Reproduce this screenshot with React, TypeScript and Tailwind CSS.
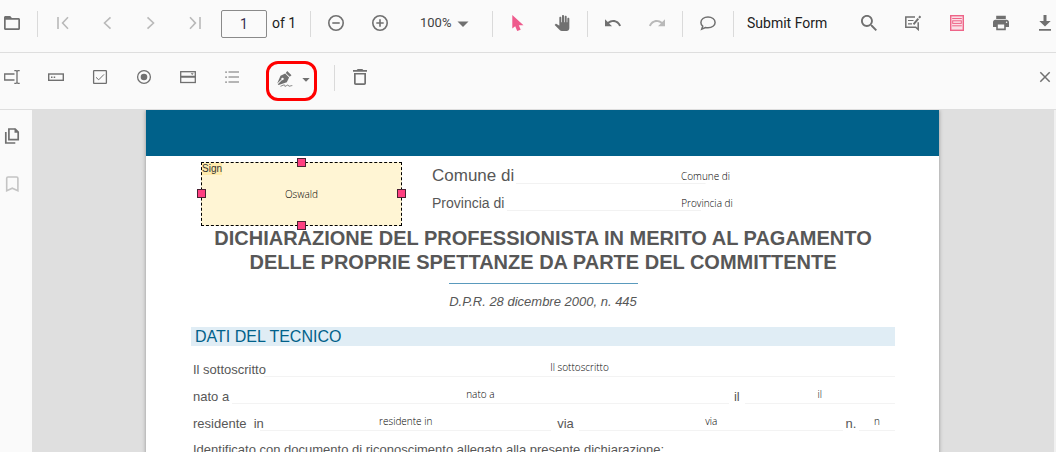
import { ReactNode } from "react"

type IconProps = { children: ReactNode; viewBox?: string; className?: string }

function Icon({ children, viewBox = "0 0 16 16", className = "" }: IconProps) {
  return (
    <svg viewBox={viewBox} fill="currentColor" aria-hidden="true" className={`size-4 shrink-0 ${className}`}>
      {children}
    </svg>
  )
}

function Line({ d, w = 1.6 }: { d: string; w?: number }) {
  return <path d={d} fill="none" stroke="currentColor" strokeWidth={w} />
}

function ToolButton({ label, children, className = "w-11", disabled }: {
  label: string
  children: ReactNode
  className?: string
  disabled?: boolean
}) {
  return (
    <button
      type="button"
      aria-label={label}
      disabled={disabled}
      className={`flex h-8 shrink-0 items-center justify-center disabled:text-[#b9b9b9] ${className}`}
    >
      {children}
    </button>
  )
}

function Separator() {
  return <div className="mx-[3px] mt-0.5 h-[26px] w-px shrink-0 bg-[#dadada]" />
}

function MainToolbar() {
  return (
    <div className="flex h-[53px] items-center border-b border-[#dedede] pb-1.5">
      <ToolButton label="Open file" className="w-[34px] pr-2.5">
        <Icon>
          <path fillRule="evenodd" d="M1.500 1h4.700l1.700 2h6.600C15.400 3 16 3.600 16 4.500v9c0 .9-.6 1.500-1.500 1.500h-13C.6 15 0 14.400 0 13.500v-11C0 1.600.6 1 1.500 1zM1.700 4.700v8.600h12.600V4.700z" />
        </Icon>
      </ToolButton>
      <Separator />
      <ToolButton label="First page" disabled>
        <Icon><Line d="M3 2v12M13 2.300 7.600 8l5.400 5.700" /></Icon>
      </ToolButton>
      <ToolButton label="Previous page" disabled>
        <Icon><Line d="M11.500 2.300 5.500 8l6 5.700" /></Icon>
      </ToolButton>
      <ToolButton label="Next page" disabled>
        <Icon><Line d="M4.500 2.300l6 5.700-6 5.700" /></Icon>
      </ToolButton>
      <ToolButton label="Last page" disabled>
        <Icon><Line d="M3 2.300 8.400 8 3 13.700M13 2v12" /></Icon>
      </ToolButton>
      <input
        type="text"
        aria-label="Page number"
        defaultValue="1"
        className="mx-1 mt-0.5 h-7 w-[46px] shrink-0 rounded-xs border border-[#8a8a8a] bg-transparent text-center text-sm text-[#3a3052]"
      />
      <span className="w-9 shrink-0 pl-px text-sm text-[#212121]">of 1</span>
      <Separator />
      <ToolButton label="Zoom out">
        <Icon>
          <circle cx="8" cy="8" r="7.2" fill="none" stroke="currentColor" strokeWidth="1.6" />
          <Line d="M4.300 8h7.400" />
        </Icon>
      </ToolButton>
      <ToolButton label="Zoom in">
        <Icon>
          <circle cx="8" cy="8" r="7.2" fill="none" stroke="currentColor" strokeWidth="1.6" />
          <Line d="M4.300 8h7.400M8 4.300v7.400" />
        </Icon>
      </ToolButton>
      <button type="button" className="flex w-[87px] shrink-0 items-center gap-1 pl-[18px] text-[13px] text-[#424242]">
        100%
        <Icon className="text-[#707070]"><path d="M2.500 6.500h11L8 12z" /></Icon>
      </button>
      <Separator />
      <ToolButton label="Selection" className="w-11 text-[#ee5a8c]">
        <Icon><path d="M2.300 0v13.500l2.900-2.200 2 4.700 3.500-1.200-1.900-4.600h4.700z" /></Icon>
      </ToolButton>
      <ToolButton label="Pan">
        <Icon viewBox="0 0 24 24">
          <path d="M23 5.5V20c0 2.2-1.8 4-4 4h-7.3c-1.08 0-2.1-.43-2.85-1.19L1 14.83s1.26-1.23 1.3-1.25c.22-.19.49-.29.79-.29.22 0 .42.06.6.16.04.01 4.31 2.46 4.31 2.46V4c0-.83.67-1.5 1.5-1.5S11 3.17 11 4v7h1V1.5c0-.83.67-1.5 1.5-1.5S15 .67 15 1.5V11h1V2.5c0-.83.67-1.5 1.5-1.5s1.5.67 1.5 1.5V11h1V5.5c0-.83.67-1.5 1.5-1.5s1.5.67 1.5 1.500z" />
        </Icon>
      </ToolButton>
      <Separator />
      <ToolButton label="Undo">
        <Icon viewBox="2 1.500 20.500 20.500">
          <path d="M12.5 8c-2.65 0-5.05.99-6.9 2.6L2 7v9h9l-3.62-3.62c1.39-1.16 3.16-1.88 5.12-1.88 3.54 0 6.55 2.31 7.6 5.5l2.37-.78C21.08 11.03 17.15 8 12.5 8z" />
        </Icon>
      </ToolButton>
      <ToolButton label="Redo" disabled>
        <Icon viewBox="1.500 1.500 20.500 20.500">
          <path d="M18.4 10.6C16.55 8.99 14.15 8 11.5 8c-4.65 0-8.58 3.03-9.96 7.22L3.9 16c1.05-3.19 4.05-5.5 7.6-5.5 1.95 0 3.73.72 5.12 1.88L13 16h9V7l-3.6 3.6z" />
        </Icon>
      </ToolButton>
      <Separator />
      <ToolButton label="Comment">
        <Icon><Line d="M1.700 14.200l1-3C1.500 10.200.9 9 .9 7.500c0-3.200 3.100-5.600 7.100-5.600s7.100 2.400 7.100 5.500-3.100 5.400-7.100 5.400c-1 0-1.800-.1-2.600-.3z" w={1.5} /></Icon>
      </ToolButton>
      <Separator />
      <button type="button" className="shrink-0 px-2.5 text-sm text-[#212121]">Submit Form</button>
      <div className="ml-auto flex shrink-0 gap-7 pr-[3px]">
        <ToolButton label="Search" className="w-4">
          <Icon viewBox="3 3 17.500 17.500">
            <path d="M15.5 14h-.79l-.28-.27C15.41 12.59 16 11.11 16 9.5 16 5.91 13.09 3 9.5 3S3 5.91 3 9.5 5.91 16 9.5 16c1.61 0 3.09-.59 4.23-1.57l.27.28v.79l5 4.99L20.49 19l-4.99-5zm-6 0C7.01 14 5 11.99 5 9.5S7.01 5 9.5 5 14 7.01 14 9.500 11.99 14 9.500 14z" />
          </Icon>
        </ToolButton>
        <ToolButton label="Edit annotations" className="w-4">
          <Icon>
            <Line d="M10 2H.8v10.200h9.900l2.500 2.300V7.200" w={1.5} />
            <Line d="M3 5.500h5.500M3 8.800h4" w={1.2} />
            <Line d="M8.500 9.300 13.300 3.700" w={2} />
            <Line d="M14 2.900 15.500 1.200" w={2} />
          </Icon>
        </ToolButton>
        <ToolButton label="Form designer" className="w-4 text-[#ee6488]">
          <Icon>
            <rect x="1.7" y=".7" width="12.600" height="14.600" fill="#fbdfe6" stroke="currentColor" strokeWidth="1.4" />
            <rect x="3.700" y="5.800" width="8.600" height="2.600" fill="none" stroke="currentColor" />
            <Line d="M3.200 3.500h9.600M3.200 10.800h9.600" w={1} />
          </Icon>
        </ToolButton>
        <ToolButton label="Print" className="w-4">
          <Icon viewBox="2 2 20 20">
            <path d="M19 8H5c-1.66 0-3 1.34-3 3v6h4v4h12v-4h4v-6c0-1.66-1.34-3-3-3zm-3 11H8v-5h8v5zm3-7c-.55 0-1-.45-1-1s.45-1 1-1 1 .45 1 1-.45 1-1 1zm-1-9H6v4h12V3z" />
          </Icon>
        </ToolButton>
        <ToolButton label="Download" className="w-4">
          <Icon><path d="M6.500 0h3v6h4.200L8 11.600 2.300 6h4.200zM2 14h12v1.800H2z" /></Icon>
        </ToolButton>
      </div>
    </div>
  )
}

function FormToolbar() {
  return (
    <div className="flex h-[57px] items-center border-b border-[#dedede] pb-2 pl-1">
      <div className="flex shrink-0 gap-7">
        <ToolButton label="Text box" className="w-4">
          <Icon>
            <Line d="M10.500 5H.7v6h9.800" w={1.3} />
            <Line d="M10.300 1.600h1.700l1 .8 1-.8h1.700M13 2.400v11.200M10.300 14.400h1.700l1-.8 1 .8h1.700" w={1.3} />
          </Icon>
        </ToolButton>
        <ToolButton label="Password" className="w-4">
          <Icon>
            <rect x=".7" y="5" width="14.600" height="6.300" fill="none" stroke="currentColor" strokeWidth="1.4" />
            <path d="M3 7.400h1.500v1.500H3zM5.700 7.400h1.500v1.500H5.700z" />
          </Icon>
        </ToolButton>
        <ToolButton label="Check box" className="w-4">
          <Icon>
            <rect x="1.600" y="1.600" width="12.800" height="12.800" rx=".6" fill="none" stroke="currentColor" strokeWidth="1.300" />
            <Line d="M4 8.300l2.700 2.500L12 5.400" w={1} />
          </Icon>
        </ToolButton>
        <ToolButton label="Radio button" className="w-4">
          <Icon>
            <circle cx="8" cy="8" r="6.400" fill="none" stroke="currentColor" strokeWidth="1.300" />
            <circle cx="8" cy="8" r="3.300" />
          </Icon>
        </ToolButton>
        <ToolButton label="Drop down" className="w-4">
          <Icon>
            <rect x=".7" y="2.700" width="14.600" height="10.800" fill="none" stroke="currentColor" strokeWidth="1.300" />
            <path d="M.5 6.800h15v2H.5zM10.700 4.300h3l-1.500 1.700z" />
          </Icon>
        </ToolButton>
        <ToolButton label="List box" className="w-4">
          <Icon>
            <path d="M1.300 2.400h1.500v1.300H1.300zM1.300 7.400h1.500v1.300H1.300zM1.300 12.400h1.500v1.300H1.300z" />
            <Line d="M4.500 3h10.500M4.500 8h10.500M4.500 13h10.500" w={1.2} />
          </Icon>
        </ToolButton>
      </div>
      <button
        type="button"
        aria-label="Add signature"
        className="mt-2 ml-[26px] flex h-10 w-[51px] shrink-0 items-center gap-[5px] rounded-xl border-3 border-[#ff0000] pb-1 pl-2"
      >
        <Icon>
          <path d="M10.200 0l4.300 4.300-1.800 1.500-3.900-3.900zM8.200 2.600l3.900 3.900-2.300 4.700L1.600 14l-.8-.7 4.300-4.200a1.200 1.200 0 1 0-.7-.7L.2 12.500 3.500 4.800z" />
          <Line d="M3.500 15.300c2-.8 3-1.500 4-1.200s-.3 1.400.8 1.200 1.500-1.400 2.600-1.200.3 1.200 1.400 1.100 1.500-.6 3-.6" w={0.9} />
        </Icon>
        <Icon><path d="M4.300 7h7.400L8 10.700z" /></Icon>
      </button>
      <div className="w-3.5 shrink-0" />
      <Separator />
      <ToolButton label="Delete">
        <Icon>
          <path fillRule="evenodd" d="M5.700 0h4.600l1 1H15v1.700H1V1h3.700zM2 4h12v10.300c0 1-.8 1.700-1.700 1.700H3.700C2.800 16 2 15.300 2 14.300zM3.700 5.600v8.700h8.600V5.600z" />
        </Icon>
      </ToolButton>
      <ToolButton label="Close" className="ml-auto w-[22px]">
        <Icon><Line d="M3.300 3.300l9.400 9.400M12.700 3.300l-9.400 9.400" w={1.5} /></Icon>
      </ToolButton>
    </div>
  )
}

function Sidebar() {
  return (
    <aside className="flex w-8 shrink-0 flex-col gap-8 bg-[#fafafa] pt-[18px] pl-1">
      <button type="button" aria-label="Page thumbnails" className="w-4">
        <Icon>
          <Line d="M4.900 1h6.300l3 3v7.700H4.900zM1.800 4v11h9.500" w={1.7} />
          <path d="M10.500.3 14.800 4.700h-4.300z" />
        </Icon>
      </button>
      <button type="button" aria-label="Bookmarks" disabled className="w-4 text-[#c4c4c4]">
        <Icon><Line d="M2.700 14.700V2.300c0-.8.500-1.300 1.300-1.300h8.600c.8 0 1.300.5 1.300 1.300v12.400L8.300 12.200z" /></Icon>
      </button>
    </aside>
  )
}

const handle = "absolute size-[9px] border border-[#4a2233] bg-[#ff4081]"

function SignatureField() {
  return (
    <div className="relative mt-1.5 flex h-16 w-[201px] shrink-0 items-center justify-center border border-dashed border-black bg-[#fff5d4] text-[10px] text-black">
      <span className="absolute top-0 left-0 bg-[#ffebac] leading-3 text-[#333]">Sign</span>
      <span className="font-['Open_Sans',sans-serif] font-light">Oswald</span>
      <i className={`${handle} -top-[5px] left-[95px]`} />
      <i className={`${handle} -bottom-[5px] left-[95px]`} />
      <i className={`${handle} top-[26px] -left-[5px]`} />
      <i className={`${handle} top-[26px] -right-[5px]`} />
    </div>
  )
}

function Field({ id, value, className = "h-[18px] border-b border-[#f3f3f3] pb-0.5" }: {
  id: string
  value: string
  className?: string
}) {
  return (
    <input
      id={id}
      type="text"
      defaultValue={value}
      className={`w-full min-w-0 text-center font-['Open_Sans',sans-serif] text-[10px] font-light text-black ${className}`}
    />
  )
}

const halfLine = "h-4 bg-[linear-gradient(#f2f2f2,#f2f2f2)] bg-[length:50%_1px] bg-bottom-left bg-no-repeat"

function DocumentPage() {
  return (
    <article className="mx-auto w-full max-w-[793px] self-start bg-white pb-10 font-['Liberation_Sans',Arial,sans-serif] text-[#575757] shadow-[0_0_4px_rgba(0,0,0,0.35)]">
      <div className="h-[46px] bg-[#00618a]" />
      <div className="pr-11 pl-[45px]">
        <div className="flex items-start gap-[30px] pl-2.5">
          <SignatureField />
          <div className="flex-1 pt-px">
            <div className="grid h-[27px] grid-cols-[84px_1fr] items-end">
              <label htmlFor="comune" className="text-[17px] leading-4">Comune di</label>
              <Field id="comune" value="Comune di" className={halfLine} />
            </div>
            <div className="grid h-[27px] grid-cols-[75px_1fr] items-end">
              <label htmlFor="provincia" className="text-sm leading-4">Provincia di</label>
              <Field id="provincia" value="Provincia di" className={`pl-3 ${halfLine}`} />
            </div>
          </div>
        </div>

        <h1 className="text-center text-xl leading-6 font-bold whitespace-nowrap">
          DICHIARAZIONE DEL PROFESSIONISTA IN MERITO AL PAGAMENTO
          <br />
          DELLE PROPRIE SPETTANZE DA PARTE DEL COMMITTENTE
        </h1>
        <div className="mx-auto mt-[9px] h-px w-[189px] bg-[#5a9abd]" />
        <p className="mt-2 text-center text-[13px] leading-5 italic">D.P.R. 28 dicembre 2000, n. 445</p>

        <h2 className="mt-[15px] bg-[#e0edf5] pl-1 text-base leading-[19px] text-[#00618a]">DATI DEL TECNICO</h2>

        <div className="pt-1 pl-0.5 text-[13px] leading-[14px] whitespace-nowrap">
          <div className="grid h-[27px] grid-cols-[71px_1fr] items-end">
            <label htmlFor="sottoscritto">Il sottoscritto</label>
            <Field id="sottoscritto" value="Il sottoscritto" />
          </div>
          <div className="grid h-[27px] grid-cols-[39px_496fr_16px_150fr] items-end">
            <label htmlFor="nato">nato a</label>
            <Field id="nato" value="nato a" />
            <label htmlFor="il" className="text-center">il</label>
            <Field id="il" value="il" />
          </div>
          <div className="grid h-[27px] grid-cols-[67px_291fr_28px_263fr_16px_36fr] items-end whitespace-pre">
            <label htmlFor="residente">residente  in</label>
            <Field id="residente" value="residente in" />
            <label htmlFor="via" className="text-center">via</label>
            <Field id="via" value="via" />
            <label htmlFor="civico" className="text-center">n.</label>
            <Field id="civico" value="n" />
          </div>
          <p className="pt-3">Identificato con documento di riconoscimento allegato alla presente dichiarazione:</p>
        </div>
      </div>
    </article>
  )
}

export default function App() {
  return (
    <div className="flex h-screen flex-col overflow-hidden bg-[#fafafa] font-[Roboto,sans-serif] text-[#707070]">
      <MainToolbar />
      <FormToolbar />
      <div className="flex min-h-0 flex-1">
        <Sidebar />
        <main className="flex min-w-0 flex-1 overflow-hidden border-r-2 border-[#f1f1f1] bg-[#dfdfdf] pr-px">
          <DocumentPage />
        </main>
      </div>
    </div>
  )
}
